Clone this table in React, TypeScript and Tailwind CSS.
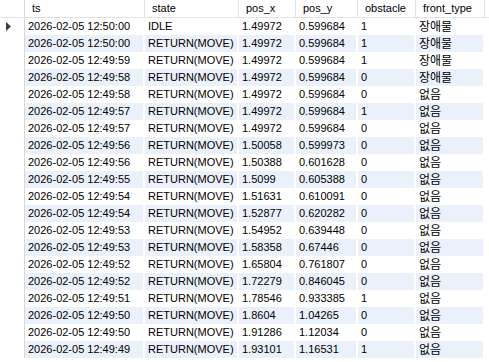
import React from "react";

type Row = [string, string, string, string, string, string];

const rows: Row[] = [
  ["2026-02-05 12:50:00", "IDLE", "1.49972", "0.599684", "1", "장애물"],
  ["2026-02-05 12:50:00", "RETURN(MOVE)", "1.49972", "0.599684", "1", "장애물"],
  ["2026-02-05 12:49:59", "RETURN(MOVE)", "1.49972", "0.599684", "1", "장애물"],
  ["2026-02-05 12:49:58", "RETURN(MOVE)", "1.49972", "0.599684", "0", "장애물"],
  ["2026-02-05 12:49:58", "RETURN(MOVE)", "1.49972", "0.599684", "0", "없음"],
  ["2026-02-05 12:49:57", "RETURN(MOVE)", "1.49972", "0.599684", "1", "없음"],
  ["2026-02-05 12:49:57", "RETURN(MOVE)", "1.49972", "0.599684", "0", "없음"],
  ["2026-02-05 12:49:56", "RETURN(MOVE)", "1.50058", "0.599973", "0", "없음"],
  ["2026-02-05 12:49:56", "RETURN(MOVE)", "1.50388", "0.601628", "0", "없음"],
  ["2026-02-05 12:49:55", "RETURN(MOVE)", "1.5099", "0.605388", "0", "없음"],
  ["2026-02-05 12:49:54", "RETURN(MOVE)", "1.51631", "0.610091", "0", "없음"],
  ["2026-02-05 12:49:54", "RETURN(MOVE)", "1.52877", "0.620282", "0", "없음"],
  ["2026-02-05 12:49:53", "RETURN(MOVE)", "1.54952", "0.639448", "0", "없음"],
  ["2026-02-05 12:49:53", "RETURN(MOVE)", "1.58358", "0.67446", "0", "없음"],
  ["2026-02-05 12:49:52", "RETURN(MOVE)", "1.65804", "0.761807", "0", "없음"],
  ["2026-02-05 12:49:52", "RETURN(MOVE)", "1.72279", "0.846045", "0", "없음"],
  ["2026-02-05 12:49:51", "RETURN(MOVE)", "1.78546", "0.933385", "1", "없음"],
  ["2026-02-05 12:49:50", "RETURN(MOVE)", "1.8604", "1.04265", "0", "없음"],
  ["2026-02-05 12:49:50", "RETURN(MOVE)", "1.91286", "1.12034", "0", "없음"],
  ["2026-02-05 12:49:49", "RETURN(MOVE)", "1.93101", "1.16531", "1", "없음"],
];

const columns = [
  { name: "ts", width: "w-[120px]" },
  { name: "state", width: "w-[94px]" },
  { name: "pos_x", width: "w-[57px]" },
  { name: "pos_y", width: "w-[62px]" },
  { name: "obstacle", width: "w-[58px]" },
  { name: "front_type", width: "w-[69px]" },
];

export default function App() {
  return (
    <div className="w-[489px] h-[362px] overflow-hidden bg-white text-[11px] text-black font-['Liberation_Sans','Noto_Sans_CJK_KR',sans-serif]">
      {/* header */}
      <div className="flex h-[18px] border-b border-[#e2e2e2]">
        <div className="w-[25px] shrink-0 border-r border-[#d6d6d6]" />
        {columns.map((col) => (
          <div
            key={col.name}
            className={`${col.width} shrink-0 border-r border-[#e2e2e2] pl-[7px] flex items-center leading-none`}
          >
            {col.name}
          </div>
        ))}
      </div>

      {rows.map((row, i) => (
        <div key={i} className="flex h-[17px]">
          <div className="w-[25px] shrink-0 border-r border-[#d6d6d6] flex items-center pl-[6px]">
            {i === 0 && (
              <svg width="5" height="9" viewBox="0 0 5 9">
                <polygon points="0,0 5,4.5 0,9" fill="#3c3c3c" />
              </svg>
            )}
          </div>
          {row.map((cell, j) => (
            <div
              key={j}
              className={`${columns[j].width} shrink-0 border-r-2 border-white pl-[3px] flex items-center leading-none whitespace-nowrap overflow-hidden ${
                i % 2 === 1 ? "bg-[#eaf1fb]" : "bg-white"
              } ${j === 5 ? "text-[12px]" : ""}`}
            >
              {cell}
            </div>
          ))}
        </div>
      ))}
    </div>
  );
}
